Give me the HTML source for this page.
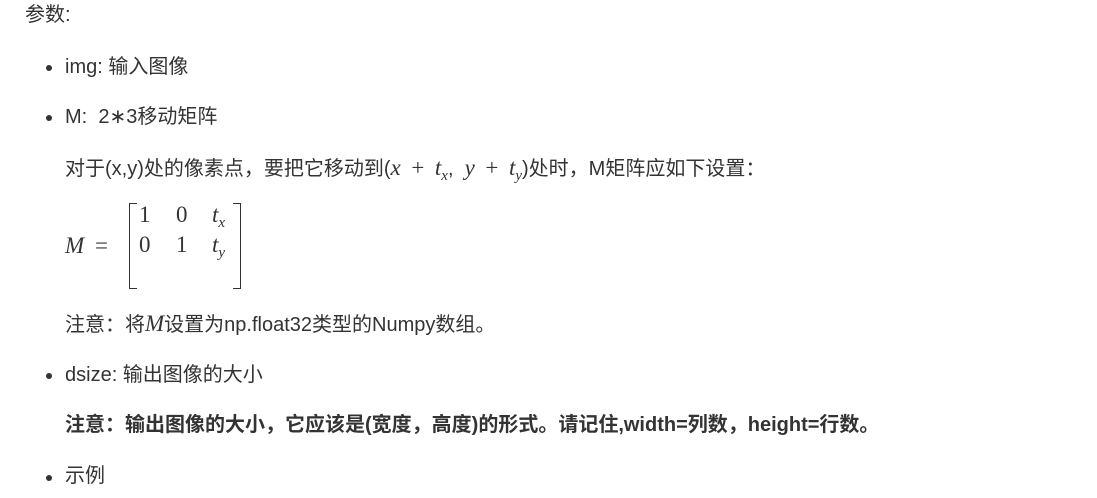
<!DOCTYPE html>
<html><head><meta charset="utf-8"><style>
body{margin:0;width:1097px;height:498px;background:#fff;overflow:hidden;position:relative;font-family:"Liberation Sans","Noto Sans CJK SC",sans-serif;font-size:20px;color:#333}
.l{position:absolute;white-space:nowrap;line-height:26px}
.d{position:absolute;width:6px;height:6px;border-radius:50%;background:#333}
.m{font-family:"Liberation Serif","DejaVu Serif",serif;font-style:italic;font-size:23px}
.r{font-family:"Liberation Serif",serif;font-size:23px;font-style:normal;margin:0 5px}
sub{font-size:15px;vertical-align:-5px}
.b{position:absolute;border:1.5px solid #333;width:7px}
</style></head><body>
<div class="l" style="left:25px;top:2px">参数:</div>
<div class="d" style="left:46px;top:65px"></div>
<div class="l" style="left:65px;top:54px">img: 输入图像</div>
<div class="d" style="left:46px;top:115px"></div>
<div class="l" style="left:65px;top:104px">M:&nbsp;&nbsp;2∗3移动矩阵</div>
<div class="l" style="left:65px;top:155px">对于(x,y)处的像素点，要把它移动到(<span class="m">x</span> <span class="r">+</span> <span class="m">t<sub>x</sub></span>,&nbsp; <span class="m">y</span> <span class="r">+</span> <span class="m">t<sub>y</sub></span>)处时，M矩阵应如下设置：</div>
<div class="l m" style="left:65px;top:233px">M</div>
<div class="l r" style="left:90px;top:233px">=</div>
<div class="b" style="left:129px;top:203px;height:84px;border-right:none"></div>
<div class="b" style="left:233px;top:203px;height:84px;border-left:none"></div>
<div class="l r" style="left:134px;top:202px">1</div>
<div class="l r" style="left:171px;top:202px">0</div>
<div class="l m" style="left:212px;top:202px">t<sub>x</sub></div>
<div class="l r" style="left:134px;top:232px">0</div>
<div class="l r" style="left:171px;top:232px">1</div>
<div class="l m" style="left:212px;top:232px">t<sub>y</sub></div>
<div class="l" style="left:65px;top:311px">注意：将<span class="m">M</span>设置为np.float32类型的Numpy数组。</div>
<div class="d" style="left:46px;top:373px"></div>
<div class="l" style="left:65px;top:362px">dsize: 输出图像的大小</div>
<div class="l" style="left:65px;top:412px;font-weight:bold">注意：输出图像的大小，它应该是(宽度，高度)的形式。请记住,width=列数，height=行数。</div>
<div class="d" style="left:46px;top:475px"></div>
<div class="l" style="left:65px;top:463px">示例</div>
</body></html>
